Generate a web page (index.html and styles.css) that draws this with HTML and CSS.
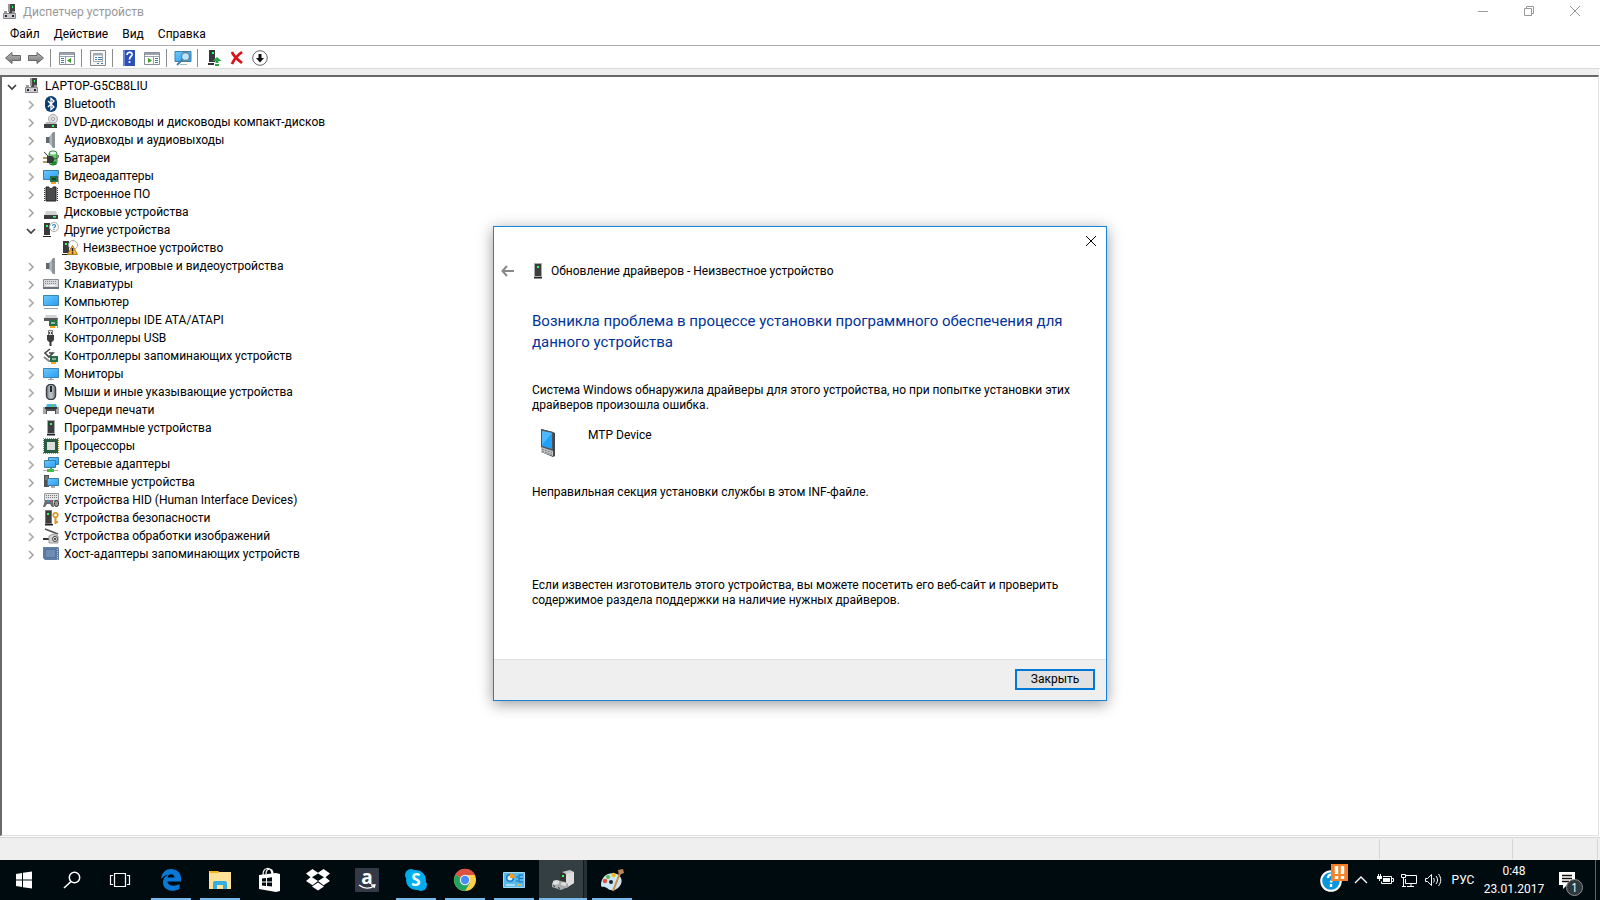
FILE: index.html
```html
<!DOCTYPE html>
<html lang="ru">
<head>
<meta charset="utf-8">
<title>Диспетчер устройств</title>
<link rel="stylesheet" href="styles.css">
</head>
<body>
<svg class="sprite" aria-hidden="true">
  <defs>
    <linearGradient id="sky" x1="0" y1="0" x2="1" y2="1"><stop offset="0" stop-color="#6cc9fa"/><stop offset="1" stop-color="#2a9df4"/></linearGradient>
    <linearGradient id="steel" x1="0" y1="0" x2="1" y2="0"><stop offset="0" stop-color="#7d858c"/><stop offset=".5" stop-color="#c3cacf"/><stop offset="1" stop-color="#767d84"/></linearGradient>
    <linearGradient id="arrowgrey" x1="0" y1="0" x2="0" y2="1"><stop offset="0" stop-color="#b9b9b9"/><stop offset="1" stop-color="#777"/></linearGradient>
  </defs>
  <symbol id="i-pc" viewBox="0 0 16 16"><path d="M7 0h6v9H7z" fill="#444"/><path d="M6 0h2v8H6z" fill="#999"/><path d="M10 2h1v2h-1z" fill="#3f5"/><path d="M1.500 9.500h12v5h-12z" fill="#c9cbce" stroke="#85888c"/><path d="M2 7h3v2H2zM10 7h3v2h-3z" fill="#999"/><path d="M3 11h2v2H3zM10 11h2v2h-2z" fill="#222"/></symbol>
  <symbol id="i-closed" viewBox="0 0 16 16"><path d="M6 5l4 4-4 4" fill="none" stroke="#a6a6a6" stroke-width="1.600"/></symbol>
  <symbol id="i-open" viewBox="0 0 16 16"><path d="M4 7l4 4 4-4" fill="none" stroke="#404040" stroke-width="1.700"/></symbol>
  <symbol id="i-bt" viewBox="0 0 16 16"><rect x="2" y="0" width="12" height="16" rx="6" fill="#0a3d74"/><path d="M5 5l6 6-3 2.500V2.500L11 5l-6 6" fill="none" stroke="#fff" stroke-width="1.300"/></symbol>
  <symbol id="i-dvd" viewBox="0 0 16 16"><circle cx="10" cy="5" r="4.500" fill="#e0e2e4" stroke="#aaa"/><circle cx="10" cy="5" r="1.500" fill="#fff" stroke="#999"/><path d="M3 8h10l1 3H2z" fill="#bbb"/><path d="M1 10h13v4H1z" fill="#3c3e40"/><path d="M9 11h2v2H9z" fill="#3f6"/></symbol>
  <symbol id="i-speaker" viewBox="0 0 16 16"><path d="M3 5h3v6H3z" fill="#60676d"/><path d="M6 5l4-5v16l-4-5z" fill="url(#steel)"/><path d="M10 0h2v16h-2z" fill="#8b939b"/></symbol>
  <symbol id="i-battery" viewBox="0 0 16 16"><rect x="6" y="1" width="8" height="14" rx="3" fill="#65c865" stroke="#557a55"/><ellipse cx="10" cy="3" rx="3" ry="1.500" fill="#dfe"/><path d="M9 12l4-1v4H8z" fill="#168f28"/><path d="M0 8h4M0 12h4" stroke="#8d7f38" stroke-width="1.500"/><path d="M4 6h4c4 0 4 7 0 7H4z" fill="#33383a"/><path d="M10 9c4 0 6-1 5-4M5 6C3 5 3 3 1 2" fill="none" stroke="#333"/></symbol>
  <symbol id="i-video" viewBox="0 0 16 16"><path d="M.5 2.500h15v9H.5z" fill="url(#sky)" stroke="#387da8"/><path d="M7 8h8v6H7z" fill="#25704b"/><path d="M9 10h4v2H9z" fill="#173f2a"/><path d="M8 14h5v2H8z" fill="#f0a71c"/><path d="M15 6h1v10h-1z" fill="#a7a7a7"/></symbol>
  <symbol id="i-chip" viewBox="0 0 16 16"><path d="M1.500 2v14M14.500 2v14" stroke="#333" stroke-dasharray="1 1"/><path d="M3 1h3c0 2 4 2 4 0h3v14H3z" fill="#4a4b4c" stroke="#222"/></symbol>
  <symbol id="i-disk" viewBox="0 0 16 16"><path d="M3 7h10l1.500 4h-13z" fill="#d0d1d2"/><path d="M1 11h14v4H1z" fill="#3a3d3e"/><path d="M10 12h3v1.500h-3z" fill="#4f6"/></symbol>
  <symbol id="i-unknown" viewBox="0 0 16 16"><path d="M1 1h6v12H1z" fill="#383a3c"/><path d="M0 14h8v1H0z" fill="#222"/><path d="M3 3h2v2H3z" fill="#3f6"/><circle cx="11" cy="5" r="4.500" fill="#fff" stroke="#aaa"/><path d="M9.500 4c0-2 3-2 3 0 0 1-1.500 1-1.500 2.300M11 7v1" fill="none" stroke="#2d84bf" stroke-width="1.200"/></symbol>
  <symbol id="i-warn" viewBox="0 0 16 16"><path d="M1 1h6v12H1z" fill="#383a3c"/><path d="M0 14h8v1H0z" fill="#222"/><path d="M3 3h2v2H3z" fill="#3f6"/><circle cx="11" cy="5" r="4.500" fill="#fff" stroke="#aaa"/><path d="M10.500 5.500L15.500 14.500h-10z" fill="#f8b63a" stroke="#b7791c"/><path d="M10.500 8v3.500M10.500 12.300v1.500" stroke="#1c1c1c" stroke-width="1.500"/></symbol>
  <symbol id="i-keyboard" viewBox="0 0 16 16"><path d="M.5 3.500h15v9H.5z" fill="#d7d9dc" stroke="#888d94"/><path d="M2 5.500h12M2 7.500h12" stroke="#8b8f95" stroke-dasharray="1 1"/><path d="M4 9.500h8" stroke="#fff"/><path d="M0 11h16v2H0z" fill="#6b7178"/></symbol>
  <symbol id="i-computer" viewBox="0 0 16 16"><path d="M.5 1.500h15v10H.5z" fill="url(#sky)" stroke="#3b86b5"/><path d="M1 14.500h14" stroke="#91a8b6"/></symbol>
  <symbol id="i-ide" viewBox="0 0 16 16"><path d="M3 3h10l2 4H1z" fill="#d0d2d3"/><path d="M1 6h14v3H1z" fill="#55595b"/><path d="M6 8h8v6H6z" fill="#25704b"/><path d="M8 10h4v2H8z" fill="#9db8a5"/><path d="M7 14h5v2H7z" fill="#f0a71c"/><path d="M14 7h1v9h-1z" fill="#999"/></symbol>
  <symbol id="i-usb" viewBox="0 0 16 16"><path d="M5.500.5h4v5h-4z" fill="#e8e8e8" stroke="#777"/><path d="M6 2h1v2H6zM8 2h1v2H8z" fill="#444"/><path d="M4 5h7v5l-2 2H6l-2-2z" fill="#3c3d3f"/><path d="M7.500 11v5" stroke="#333" stroke-width="2"/></symbol>
  <symbol id="i-storage" viewBox="0 0 16 16"><path d="M7 1L2 5l4 4 4-4H6" fill="none" stroke="#444" stroke-width="1.600"/><path d="M1 9l5 4h3" fill="none" stroke="#888" stroke-width="2"/><path d="M7 8h8v6H7z" fill="#25704b"/><path d="M9 10h4v2H9z" fill="#8fb39a"/><path d="M8 14h5v2H8z" fill="#f0a71c"/></symbol>
  <symbol id="i-monitor" viewBox="0 0 16 16"><path d="M.5 2.500h15v9H.5z" fill="url(#sky)" stroke="#3b86b5"/><path d="M7 12h2v1h2v1H5v-1h2z" fill="#9ab"/></symbol>
  <symbol id="i-mouse" viewBox="0 0 16 16"><rect x="3.500" y=".5" width="9" height="15" rx="4" fill="url(#steel)" stroke="#3b4148" stroke-width="1.500"/><path d="M8 2v6" stroke="#222a31" stroke-width="2"/></symbol>
  <symbol id="i-printer" viewBox="0 0 16 16"><path d="M4 2h9l1 3H3z" fill="#48b4e8"/><path d="M9 2h2v3H9z" fill="#6c5"/><path d="M0 5h16v7H0z" fill="#a3a7a9"/><path d="M2 5h12v2H2z" fill="#333"/><path d="M3 7h10v5H3z" fill="#4b4e50"/><path d="M4 9h8v5H4z" fill="#fff"/><path d="M14 8h1v1h-1z" fill="#5f7"/></symbol>
  <symbol id="i-tower" viewBox="0 0 16 16"><path d="M4.500.5h7v13h-7z" fill="#3b3d3f" stroke="#a8abad"/><path d="M7 3h2v2H7z" fill="#3f6"/><path d="M4 14h8v1.500H4z" fill="#222"/></symbol>
  <symbol id="i-cpu" viewBox="0 0 16 16"><path d="M.5 0v16M15.500 0v16M0 .5h16M0 15.500h16" stroke="#b58d2b" stroke-dasharray="1 1"/><path d="M1 1h14v14H1z" fill="#285c42"/><path d="M4 4h8v8H4z" fill="#dcdedb"/></symbol>
  <symbol id="i-net" viewBox="0 0 16 16"><path d="M5.500 1.500h10v7h-10z" fill="url(#sky)" stroke="#3b7da5"/><path d="M1.500 4.500h11v7h-11z" fill="url(#sky)" stroke="#3b7da5"/><path d="M0 14h15v1H0z" fill="#aab"/><path d="M7 12h2v1h2v3H4v-3h3z" fill="#47b84a"/></symbol>
  <symbol id="i-system" viewBox="0 0 16 16"><path d="M1 1h5v12H1z" fill="#4d5255"/><path d="M2 3h3M2 5h3" stroke="#9da3a7"/><path d="M4.500 4.500h11v7h-11z" fill="url(#sky)" stroke="#3b7da5"/><path d="M8 12h4v2H8z" fill="#a3adb4"/></symbol>
  <symbol id="i-hid" viewBox="0 0 16 16"><path d="M1.500 1.500h14v7h-14z" fill="#e4e5e6" stroke="#999"/><path d="M3 3.500h12M3 5.500h12" stroke="#777" stroke-dasharray="1 1"/><path d="M0 15l2-7h8l1 7H9l-2-3H4l-2 3z" fill="#686d73"/><circle cx="5" cy="9" r="1.200" fill="#2c98df"/><circle cx="8" cy="9" r="1" fill="#e44"/><rect x="11.500" y="8.500" width="4" height="6" rx="2" fill="#999" stroke="#333"/></symbol>
  <symbol id="i-security" viewBox="0 0 16 16"><path d="M2.500.5h6v13h-6z" fill="#3b3d3f" stroke="#777"/><path d="M4 3h2v2H4z" fill="#3f6"/><path d="M2 14h8v1.500H2z" fill="#222"/><circle cx="12.500" cy="5" r="2.300" fill="#fff1c8" stroke="#d8982d" stroke-width="1.600"/><path d="M12.500 7v7M13 12h2" stroke="#d8982d" stroke-width="2"/></symbol>
  <symbol id="i-imaging" viewBox="0 0 16 16"><path d="M2 1l13 5" stroke="#555" stroke-width="1.500"/><path d="M0 11h6" stroke="#333" stroke-width="2"/><path d="M6 8l4-2 5 2v7H6z" fill="#d2d4d5" stroke="#999"/><circle cx="12" cy="11" r="2.500" fill="#e8e8e8" stroke="#444"/><circle cx="12" cy="11" r="1" fill="#222"/></symbol>
  <symbol id="i-host" viewBox="0 0 16 16"><path d="M0 1h15l1 1v12H2l-2-2z" fill="#5e7ca4"/><path d="M2.500 3.500h10v8h-10z" fill="#6f8db3" stroke="#54739b"/><path d="M14.500 3v11" fill="none" stroke="#b8c8dc" stroke-dasharray="1 1"/></symbol>
</svg>

<main class="window">
  <header class="titlebar">
    <svg class="icon"><use href="#i-pc"/></svg>
    <h1>Диспетчер устройств</h1>
    <div class="caption">
      <button aria-label="Свернуть"><svg viewBox="0 0 10 10"><path d="M0 5.500h10"/></svg></button>
      <button aria-label="Восстановить"><svg viewBox="0 0 10 10"><path d="M.5 2.500h7v7h-7zM2.500 2.500v-2h7v7h-2"/></svg></button>
      <button aria-label="Закрыть окно"><svg viewBox="0 0 10 10"><path d="M0 0l10 10M10 0L0 10"/></svg></button>
    </div>
  </header>
  <nav class="menubar">
    <button>Файл</button><button>Действие</button><button>Вид</button><button>Справка</button>
  </nav>
  <div class="toolbar">
    <button aria-label="Назад"><svg class="icon" viewBox="0 0 16 16"><path d="M.5 8L7 2.500v3h8.500v5H7v3z" fill="url(#arrowgrey)" stroke="#666"/></svg></button>
    <button aria-label="Вперёд"><svg class="icon" viewBox="0 0 16 16"><path d="M15.500 8L9 2.500v3H.5v5H9v3z" fill="url(#arrowgrey)" stroke="#666"/></svg></button>
    <i class="sep"></i>
    <button aria-label="Дерево консоли"><svg class="icon" viewBox="0 0 16 16"><path d="M.5 2.500h15v12H.5z" fill="#fff" stroke="#8a9099"/><path d="M1 3h14v2H1z" fill="#9aa3ae"/><path d="M1 6.500h14M6.500 7v7" stroke="#9aa3ae"/><path d="M2 8.500h3M2 10.500h3M2 12.500h3" stroke="#487aa8"/><path d="M12 8v5l-4-2.500z" fill="#3a9e24"/></svg></button>
    <i class="sep"></i>
    <button aria-label="Свойства"><svg class="icon" viewBox="0 0 16 16"><path d="M.5 .5h15v15H.5z" fill="#f4f5f6" stroke="#888"/><path d="M3.500 3.500h9v8h-9z" fill="#fff" stroke="#a2a8af"/><path d="M4 4h8v1.500H4z" fill="#a2a8af"/><path d="M5 7.500h2M8 7.500h4M5 9.500h2M8 9.500h4" stroke="#467ca6"/><path d="M7 13.500h2M11 13.500h2" stroke="#467ca6"/></svg></button>
    <i class="sep"></i>
    <button aria-label="Справка по разделу"><svg class="icon" viewBox="0 0 16 16"><path d="M2 0h12v16H2z" fill="#2b51b5"/><path d="M2 0h2v16H2z" fill="#6788d8"/><path d="M6 5c0-4 6-3 5 0-.5 1.500-2.500 2-2.500 4.500M8.500 11v2" fill="none" stroke="#fff" stroke-width="1.700"/></svg></button>
    <button aria-label="Панель действий"><svg class="icon" viewBox="0 0 16 16"><path d="M.5 2.500h15v12H.5z" fill="#fff" stroke="#8a9099"/><path d="M1 3h14v2H1z" fill="#9aa3ae"/><path d="M1 6.500h14M9.500 7v7" stroke="#9aa3ae"/><path d="M11 8.500h3M11 10.500h3M11 12.500h3" stroke="#487aa8"/><path d="M4 8v5l4-2.500z" fill="#3a9e24"/></svg></button>
    <i class="sep"></i>
    <button aria-label="Обновить конфигурацию"><svg class="icon" viewBox="0 0 16 16"><path d="M0 1.500h16v10H0z" fill="url(#sky)" stroke="#3d82ab"/><path d="M5 14h7v1H5z" fill="#9bb"/><circle cx="10.500" cy="6.500" r="4" fill="#b8e5fb" stroke="#6a7f8d" stroke-width="1.300"/><path d="M7.500 9.500L2 15" stroke="#477da0" stroke-width="1.800"/></svg></button>
    <i class="sep"></i>
    <button aria-label="Обновить драйвер"><svg class="icon" viewBox="0 0 16 16"><path d="M3 0h6v12H3z" fill="#35383a"/><path d="M6 2h2v2H6z" fill="#3f6"/><path d="M2 13h6v2H2z" fill="#333"/><path d="M11 7l4.500 4h-3v2h-3v-2h-3zM9 14h4v2H9z" fill="#28a745"/></svg></button>
    <button aria-label="Удалить"><svg class="icon" viewBox="0 0 16 16"><path d="M3 2c2 5 6 8 10 11M13 2C9 5 5 9 3 14" fill="none" stroke="#dc1018" stroke-width="2.800"/></svg></button>
    <button aria-label="Отключить"><svg class="icon" viewBox="0 0 16 16"><circle cx="8" cy="8" r="7.300" fill="#fff" stroke="#666"/><path d="M6.500 4h3v4H12l-4 4.500L4 8h2.500z" fill="#111"/></svg></button>
  </div>

  <section class="tree" aria-label="Устройства">
    <ul>
      <li><div class="row root"><button aria-label="Свернуть узел"><svg class="icon"><use href="#i-open"/></svg></button><svg class="icon"><use href="#i-pc"/></svg><span>LAPTOP-G5CB8LIU</span></div>
        <ul>
          <li class="row"><button aria-label="Развернуть"><svg class="icon"><use href="#i-closed"/></svg></button><svg class="icon"><use href="#i-bt"/></svg><span>Bluetooth</span></li>
          <li class="row"><button aria-label="Развернуть"><svg class="icon"><use href="#i-closed"/></svg></button><svg class="icon"><use href="#i-dvd"/></svg><span>DVD-дисководы и дисководы компакт-дисков</span></li>
          <li class="row"><button aria-label="Развернуть"><svg class="icon"><use href="#i-closed"/></svg></button><svg class="icon"><use href="#i-speaker"/></svg><span>Аудиовходы и аудиовыходы</span></li>
          <li class="row"><button aria-label="Развернуть"><svg class="icon"><use href="#i-closed"/></svg></button><svg class="icon"><use href="#i-battery"/></svg><span>Батареи</span></li>
          <li class="row"><button aria-label="Развернуть"><svg class="icon"><use href="#i-closed"/></svg></button><svg class="icon"><use href="#i-video"/></svg><span>Видеоадаптеры</span></li>
          <li class="row"><button aria-label="Развернуть"><svg class="icon"><use href="#i-closed"/></svg></button><svg class="icon"><use href="#i-chip"/></svg><span>Встроенное ПО</span></li>
          <li class="row"><button aria-label="Развернуть"><svg class="icon"><use href="#i-closed"/></svg></button><svg class="icon"><use href="#i-disk"/></svg><span>Дисковые устройства</span></li>
          <li><div class="row"><button aria-label="Свернуть узел"><svg class="icon"><use href="#i-open"/></svg></button><svg class="icon"><use href="#i-unknown"/></svg><span>Другие устройства</span></div>
            <ul><li class="row leaf"><svg class="icon"><use href="#i-warn"/></svg><span>Неизвестное устройство</span></li></ul></li>
          <li class="row"><button aria-label="Развернуть"><svg class="icon"><use href="#i-closed"/></svg></button><svg class="icon"><use href="#i-speaker"/></svg><span>Звуковые, игровые и видеоустройства</span></li>
          <li class="row"><button aria-label="Развернуть"><svg class="icon"><use href="#i-closed"/></svg></button><svg class="icon"><use href="#i-keyboard"/></svg><span>Клавиатуры</span></li>
          <li class="row"><button aria-label="Развернуть"><svg class="icon"><use href="#i-closed"/></svg></button><svg class="icon"><use href="#i-computer"/></svg><span>Компьютер</span></li>
          <li class="row"><button aria-label="Развернуть"><svg class="icon"><use href="#i-closed"/></svg></button><svg class="icon"><use href="#i-ide"/></svg><span>Контроллеры IDE ATA/ATAPI</span></li>
          <li class="row"><button aria-label="Развернуть"><svg class="icon"><use href="#i-closed"/></svg></button><svg class="icon"><use href="#i-usb"/></svg><span>Контроллеры USB</span></li>
          <li class="row"><button aria-label="Развернуть"><svg class="icon"><use href="#i-closed"/></svg></button><svg class="icon"><use href="#i-storage"/></svg><span>Контроллеры запоминающих устройств</span></li>
          <li class="row"><button aria-label="Развернуть"><svg class="icon"><use href="#i-closed"/></svg></button><svg class="icon"><use href="#i-monitor"/></svg><span>Мониторы</span></li>
          <li class="row"><button aria-label="Развернуть"><svg class="icon"><use href="#i-closed"/></svg></button><svg class="icon"><use href="#i-mouse"/></svg><span>Мыши и иные указывающие устройства</span></li>
          <li class="row"><button aria-label="Развернуть"><svg class="icon"><use href="#i-closed"/></svg></button><svg class="icon"><use href="#i-printer"/></svg><span>Очереди печати</span></li>
          <li class="row"><button aria-label="Развернуть"><svg class="icon"><use href="#i-closed"/></svg></button><svg class="icon"><use href="#i-tower"/></svg><span>Программные устройства</span></li>
          <li class="row"><button aria-label="Развернуть"><svg class="icon"><use href="#i-closed"/></svg></button><svg class="icon"><use href="#i-cpu"/></svg><span>Процессоры</span></li>
          <li class="row"><button aria-label="Развернуть"><svg class="icon"><use href="#i-closed"/></svg></button><svg class="icon"><use href="#i-net"/></svg><span>Сетевые адаптеры</span></li>
          <li class="row"><button aria-label="Развернуть"><svg class="icon"><use href="#i-closed"/></svg></button><svg class="icon"><use href="#i-system"/></svg><span>Системные устройства</span></li>
          <li class="row"><button aria-label="Развернуть"><svg class="icon"><use href="#i-closed"/></svg></button><svg class="icon"><use href="#i-hid"/></svg><span>Устройства HID (Human Interface Devices)</span></li>
          <li class="row"><button aria-label="Развернуть"><svg class="icon"><use href="#i-closed"/></svg></button><svg class="icon"><use href="#i-security"/></svg><span>Устройства безопасности</span></li>
          <li class="row"><button aria-label="Развернуть"><svg class="icon"><use href="#i-closed"/></svg></button><svg class="icon"><use href="#i-imaging"/></svg><span>Устройства обработки изображений</span></li>
          <li class="row"><button aria-label="Развернуть"><svg class="icon"><use href="#i-closed"/></svg></button><svg class="icon"><use href="#i-host"/></svg><span>Хост-адаптеры запоминающих устройств</span></li>
        </ul>
      </li>
    </ul>
  </section>
  <footer class="statusbar"><span></span><span></span><span></span></footer>
</main>

<section class="dialog" role="dialog" aria-labelledby="dialog-title">
  <div class="dialog-top"><button class="close" aria-label="Закрыть диалог"><svg viewBox="0 0 10 10"><path d="M0 0l10 10M10 0L0 10"/></svg></button></div>
  <div class="dialog-head">
    <button aria-label="Назад"><svg viewBox="0 0 14 12"><path d="M13 6H1.500M6 1L1.500 6 6 11"/></svg></button>
    <svg class="icon"><use href="#i-tower"/></svg>
    <span id="dialog-title">Обновление драйверов - Неизвестное устройство</span>
  </div>
  <div class="dialog-body">
    <h2>Возникла проблема в процессе установки программного обеспечения для<br>данного устройства</h2>
    <p>Система Windows обнаружила драйверы для этого устройства, но при попытке установки этих<br>драйверов произошла ошибка.</p>
    <div class="device">
      <svg viewBox="0 0 32 32"><path d="M9 2l12 3 2 1v23l-2 1-12-5z" fill="#42474a"/><path d="M9 2l12 3v19L9 20z" fill="#50555a"/><path d="M10 4l10 2v16l-10-3z" fill="#22a0f5"/><path d="M10 4l10 2-10 12z" fill="#50b7fa"/><path d="M9 20l12 4v5L9 25z" fill="#c5c9cb"/><path d="M10 22l10 3.500M10 24l10 3.500" stroke="#777" stroke-dasharray="2 1"/></svg>
      <span>MTP Device</span>
    </div>
    <p class="reason">Неправильная секция установки службы в этом INF-файле.</p>
    <p>Если известен изготовитель этого устройства, вы можете посетить его веб-сайт и проверить<br>содержимое раздела поддержки на наличие нужных драйверов.</p>
  </div>
  <div class="dialog-foot"><button>Закрыть</button></div>
</section>

<footer class="taskbar">
  <div class="system-buttons">
    <button aria-label="Пуск"><svg viewBox="0 0 24 24"><path d="M4 6l6-1v6.500H4zM11 4.800L20 3.500v8h-9zM4 12.500h6V19l-6-1zM11 12.500h9v8l-9-1.300z" fill="#fff"/></svg></button>
    <button aria-label="Поиск"><svg viewBox="0 0 24 24"><circle cx="14.500" cy="9.500" r="5.200" fill="none" stroke="#fff" stroke-width="1.500"/><path d="M11 13.500L4 20" stroke="#fff" stroke-width="1.700"/></svg></button>
    <button aria-label="Представление задач"><svg viewBox="0 0 24 24"><path d="M6.500 5.500h11v13h-11zM5 7.500H2.500v9H5M19 7.500h2.500v9H19" fill="none" stroke="#fff" stroke-width="1.200"/></svg></button>
  </div>
  <div class="apps">
    <button class="running" aria-label="Edge"><svg viewBox="0 0 24 24"><path d="M2 11C3 4 7 1 12 1c6 0 10 4 10 9v3.500H8.500c.2 4.500 7.500 5.500 12 2.500v5C13 25 4 22 4 14.500 4 10 7 7.500 10 6.500 6.500 7 4 8.500 2 11zM8.500 9.500h7C15.500 5 9 5 8.500 9.500z" fill="#0a78d7"/></svg></button>
    <button class="running" aria-label="Проводник"><svg viewBox="0 0 24 24"><path d="M1 3h9l1 1h12v17H1z" fill="#ffe296"/><path d="M2 3h8l1 2H2z" fill="#f6b31e"/><path d="M5 21v-6c0-1 .5-2 2-2h10c1.500 0 2 1 2 2v6h-4v-4H9v4z" fill="#32aee4"/></svg></button>
    <button aria-label="Магазин"><svg viewBox="0 0 24 24"><path d="M2 7l17-2 4 1v17l-4 1L2 21z" fill="#fff"/><path d="M6 7c0-8 8-9 9-1M9 6c0-7 7-6 7 0" fill="none" stroke="#fff" stroke-width="1.200"/><path d="M5 10.500l4-.5v3.500H5zM10 9.900l5-.6v4.200h-5zM5 14.500h4V18l-4-.5zM10 14.500h5v4l-5-.4z" fill="#000a0e"/></svg></button>
    <button aria-label="Dropbox"><svg viewBox="0 0 24 24"><path d="M6.500 1L12 4.700 17.500 1 24 5.500l-4.500 3.700L24 13l-6.500 4.200L12 13l-5.500 4.200L0 13l4.500-3.800L0 5.500zM12 5.500L6 9.200l6 3.700 6-3.700zM6 18.500l6-4 6 4-6 4z" fill="#fff"/></svg></button>
    <button aria-label="Amazon"><svg viewBox="0 0 24 24"><rect width="24" height="24" rx="1" fill="#343948"/><text x="12" y="16" text-anchor="middle" class="amazon">a</text><path d="M4 17c5 4 11 4 15 1M16 17h4l-1 3" fill="none" stroke="#fff" stroke-width="1.300"/></svg></button>
    <button class="running" aria-label="Skype"><svg viewBox="0 0 24 24"><circle cx="7" cy="7" r="6" fill="#00a9ec"/><circle cx="17" cy="17" r="6" fill="#00a9ec"/><circle cx="12" cy="12" r="10" fill="#00aff0"/><text x="12" y="18" text-anchor="middle" class="skype">S</text></svg></button>
    <button class="running" aria-label="Chrome"><svg viewBox="0 0 24 24"><circle cx="12" cy="12" r="11" fill="#ffcd46"/><path d="M12 12L2.500 6.500A11 11 0 0 0 12 23l5-8.500z" fill="#1fa463"/><path d="M12 12L2.500 6.500A11 11 0 0 1 22 7H12z" fill="#dd5044"/><circle cx="12" cy="12" r="5.200" fill="#f5f5f5"/><circle cx="12" cy="12" r="4.200" fill="#4b8bf5"/></svg></button>
    <button class="running" aria-label="Панель управления"><svg viewBox="0 0 24 24"><path d="M1.500 4.500h21v15h-21z" fill="#55baf0" stroke="#a4daf7"/><circle cx="8" cy="10" r="4" fill="#1f77c2"/><circle cx="8" cy="10" r="2.500" fill="#d5effd"/><path d="M8 10V5a5 5 0 0 1 5 5z" fill="#f59a1c"/><path d="M14 9h2M14 13h2M17 7v7M17 7h4M17 10.500h4M17 14h4" fill="none" stroke="#156caf"/><path d="M4 17h9" stroke="#fff"/><path d="M15 17h5" stroke="#f2b52d" stroke-width="1.500"/></svg></button>
    <button class="running active" aria-label="Диспетчер устройств"><svg viewBox="0 0 24 24"><path d="M11 4l8-2 4 2v11l-8 5-4-4z" fill="#c8c8c8"/><path d="M15 6l8-2v11l-8 5z" fill="#ddd"/><path d="M11 4l4 2v10l-6-3V6z" fill="#333"/><path d="M11 7h2v2h-2z" fill="#3f5"/><path d="M1 15l5-3 8 2 3 2v3l-7 3-9-3z" fill="#a9abad"/><path d="M2 13l3-1 3 1v3l-4 1-2-1zM10 15l3-1 2 1v3l-5-1z" fill="#ddd"/><path d="M2 17l2 1v1l-2-1zM7 19l2 1v1l-2-1z" fill="#333"/></svg></button>
    <button class="running" aria-label="Paint"><svg viewBox="0 0 24 24"><path d="M1 17C1 8 9 3 17 6c6 3 6 10 1 14-4 3-8 3-11 0-3-2-6 0-6-3z" fill="#c9e6f4"/><circle cx="5" cy="13" r="2.200" fill="#e74a3f"/><circle cx="8" cy="9" r="2" fill="#58b947"/><circle cx="13.500" cy="7" r="2.200" fill="#f7ba22"/><circle cx="11" cy="14" r="2" fill="#14242b"/><path d="M20 5l-7 18" stroke="#d68b38" stroke-width="2"/><path d="M18 2l5-1 1 4-5 2z" fill="#bd8256"/></svg></button>
  </div>
  <div class="tray">
    <button class="help" aria-label="Уведомления справки"><svg viewBox="0 0 30 30"><circle cx="12" cy="18" r="9.800" fill="#0795dc" stroke="#fff" stroke-width="2"/><path d="M9 15c0-5 7-4 6 0-.5 2-3 2-3 4.500M12 21v3" fill="none" stroke="#fff" stroke-width="2.400"/><path d="M12 1h17v17H12z" fill="#f58025"/><path d="M17.500 3v8M23.500 3v8M17.500 13v3M23.500 13v3" stroke="#fff" stroke-width="3.500"/></svg></button>
    <button aria-label="Скрытые значки"><svg viewBox="0 0 18 18"><path d="M3 12l6-6 6 6" fill="none" stroke="#fff" stroke-width="1.400"/></svg></button>
    <button aria-label="Питание"><svg viewBox="0 0 18 18"><path d="M7 5.500h8.500v7h-10v-2M16 7.500h1.500v3H16" fill="none" stroke="#fff"/><path d="M7 7h7v4H7zM2 3h1v2H2zM4 3h1v2H4zM1 5h5v3H4v2H3V8H1z" fill="#fff"/></svg></button>
    <button aria-label="Сеть"><svg viewBox="0 0 18 18"><path d="M6 4.500h10.500v8H5.500V8M11 13v3M7 15.500h7" fill="none" stroke="#fff"/><path d="M1.500 3.500h4v3h-4zM3.500 7v8M2 15.500h4" fill="none" stroke="#fff"/></svg></button>
    <button aria-label="Громкость"><svg viewBox="0 0 18 18"><path d="M1.500 7.500h2l4-4v11l-4-4h-2zM9.500 7c1 1.500 1 3 0 4.500M12 5c2 2.500 2 5.500 0 8M14.500 3c3 4 3 8 0 12" fill="none" stroke="#fff"/></svg></button>
    <button class="lang">РУС</button>
    <button class="clock"><time>0:48</time><time>23.01.2017</time></button>
    <button class="notice" aria-label="Центр уведомлений"><svg viewBox="0 0 26 26"><path d="M1 2h16v13h-8l-4 4v-4H1z" fill="#fff"/><path d="M4 5.500h10M4 8.500h10M4 11.500h7" stroke="#111" stroke-width="1.300"/><circle cx="16.500" cy="17.500" r="8" fill="#30373a" stroke="#899093"/><text x="16.500" y="22" text-anchor="middle" class="count">1</text></svg></button>
    <i class="peek"></i>
  </div>
</footer>
</body>
</html>
```

FILE: styles.css
```css
* { box-sizing: border-box; }
body {
  margin: 0;
  height: 100vh;
  display: flex;
  flex-direction: column;
  overflow: hidden;
  background: #fff;
  color: #000;
  font: 12px/18px Roboto, "Open Sans", sans-serif;
}
button { margin: 0; padding: 0; border: 0; background: none; color: inherit; font: inherit; }
svg { display: block; overflow: visible; }
.sprite { width: 0; height: 0; position: absolute; }
.icon { width: 16px; height: 16px; flex: none; }
.window { flex: 1; min-height: 0; display: flex; flex-direction: column; }

.titlebar { height: 23px; display: flex; align-items: center; gap: 5px; padding-left: 2px; color: #999; }
.titlebar h1 { margin: 0; font-size: 12px; font-weight: 400; }
.caption { display: flex; margin: 0 2px 2px auto; }
.caption button { width: 46px; height: 21px; display: grid; place-items: center; }
.caption svg, .close svg { width: 10px; height: 10px; fill: none; stroke: #999; }

.menubar { height: 23px; display: flex; align-items: center; padding: 0 3px; border-bottom: 1px solid #adadb2; }
.menubar button { padding: 0 7px; }

.toolbar { height: 23px; display: flex; align-items: center; gap: 5px; padding: 2px 0 0 4px; border-bottom: 1px solid #dadada; }
.toolbar button { width: 18px; display: grid; place-items: center; }
.sep { width: 1px; height: 18px; margin-right: 2px; background: #8c8c8c; }

.tree {
  flex: 1;
  min-height: 0;
  margin-top: 6px;
  overflow: hidden;
  border: 2px solid #696969;
  border-right: 1px solid #e0e0e0;
  border-bottom: 1px solid #e0e0e0;
  margin-right: 1px;
  box-shadow: 0 -6px 0 #efefef;
}
.tree ul { margin: 0; padding: 0; list-style: none; }
.row { height: 18px; display: flex; align-items: center; padding-left: 21px; }
.row button { margin-right: 4px; }
.row span { margin-left: 5px; white-space: nowrap; }
.row.root { padding-left: 2px; }
.row.leaf { padding-left: 60px; }

.statusbar { height: 23px; margin-top: 1px; display: flex; justify-content: flex-end; padding: 1px 2px 1px 0; border-top: 1px solid #d5d5d5; background: #efefef; }
.statusbar span { width: 133px; border-right: 1px solid #d5d5d5; }
.statusbar span:last-child { width: 85px; }

.dialog {
  position: absolute;
  top: 226px;
  left: 50%;
  width: 614px;
  transform: translateX(-50%);
  border: 1px solid #1883d7;
  background: #fff;
  box-shadow: 0 3px 14px rgba(0, 0, 0, .4);
}
.dialog-top { height: 28px; display: flex; justify-content: flex-end; }
.close { width: 30px; display: grid; place-items: center; }
.close svg { stroke: #000; }
.dialog-head { height: 32px; display: flex; align-items: center; padding-left: 7px; }
.dialog-head button { width: 14px; margin-right: 15px; }
.dialog-head button svg { width: 14px; height: 12px; fill: none; stroke: #888; stroke-width: 2; }
.dialog-head span { margin-left: 5px; }
.dialog-body { padding: 24px 20px 51px 38px; line-height: 15px; white-space: nowrap; }
.dialog-body h2 { margin: 0 0 30px; color: #003399; font-size: 15px; line-height: 21px; font-weight: 400; }
.dialog-body p { margin: 0; }
.device { display: flex; gap: 24px; margin: 14px 0 26px; }
.device svg { width: 32px; height: 32px; }
.device span { padding-top: 1px; }
.dialog-body .reason { margin-bottom: 78px; }
.dialog-foot { height: 41px; display: flex; justify-content: flex-end; align-items: center; padding: 0 11px 1px 0; border-top: 1px solid #dfdfdf; background: #efefef; }
.dialog-foot button { width: 80px; height: 21px; border: 2px solid #0078d7; background: #e1e1e1; line-height: 17px; }

.taskbar { height: 40px; display: flex; flex: none; background: #000b0f; color: #fff; }
.taskbar button { display: grid; place-items: center; }
.system-buttons { display: flex; }
.system-buttons button { width: 48px; }
.apps { display: flex; gap: 1px; margin-left: 3px; }
.apps button { width: 48px; position: relative; }
.system-buttons svg, .apps svg { width: 24px; height: 24px; }
.running::after { content: ""; position: absolute; left: 4px; right: 4px; bottom: 0; height: 2px; background: #76b9ed; }
.apps .active { background: linear-gradient(90deg, #343f43 44px, #11191c 44px, #11191c 45px, #273034 45px); }
.active::after { left: 0; right: 0; }
.amazon { font: bold 19px "Open Sans", sans-serif; fill: #fff; }
.skype { font: bold 17px "Open Sans", sans-serif; fill: #fff; }
.count { font: 12px "Open Sans", sans-serif; fill: #fff; }
.tray { display: flex; margin-left: auto; }
.tray button { width: 24px; }
.tray svg { width: 18px; height: 18px; }
.tray .help { width: 30px; }
.tray .help svg { width: 30px; height: 30px; margin-bottom: 4px; }
.tray .lang { width: 36px; }
.tray .clock { width: 66px; align-content: center; }
.tray .notice { width: 48px; }
.tray .notice svg { width: 26px; height: 26px; margin-top: 6px; }
.peek { width: 5px; border-left: 1px solid #5d6669; }
```
